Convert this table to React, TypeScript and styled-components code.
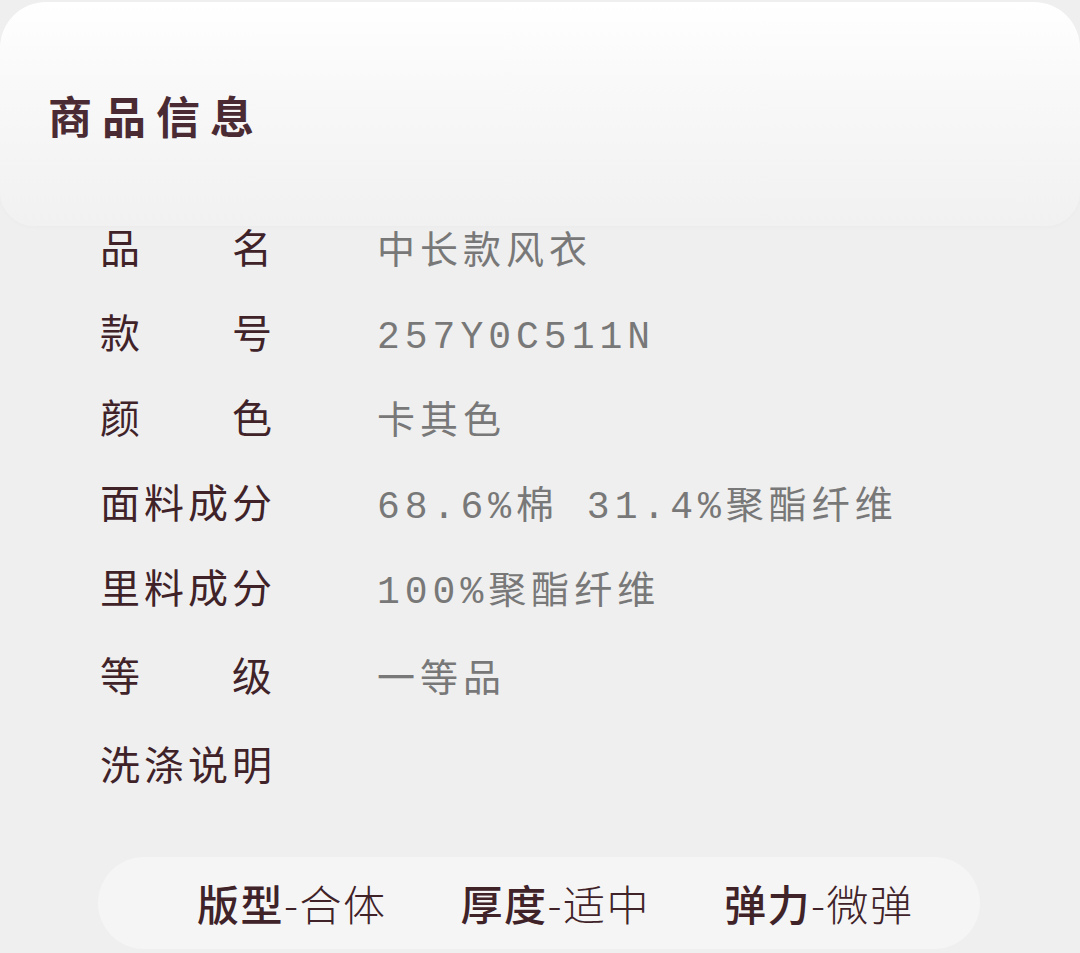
import styled, { createGlobalStyle } from 'styled-components';

//Type
interface specRow {
  label: string
  value?: string
  extra?: number
}

const rows: specRow[] = [
  { label: '品名', value: '中长款风衣' },
  { label: '款号', value: '257Y0C511N' },
  { label: '颜色', value: '卡其色' },
  { label: '面料成分', value: '68.6%棉 31.4%聚酯纤维' },
  { label: '里料成分', value: '100%聚酯纤维' },
  { label: '等级', value: '一等品', extra: 3 },
  { label: '洗涤说明', extra: 4 },
]

const tags = [
  { name: '版型', value: '合体' },
  { name: '厚度', value: '适中' },
  { name: '弹力', value: '微弹' },
]

const App: React.FC = () => {
  return (
    <>
      <GlobalStyle />
      <Page>
        <HeaderCard>
          <Title>商品信息</Title>
        </HeaderCard>
        <SpecList>
          {rows.map((row) => (
            <Row key={row.label} $extra={row.extra || 0}>
              <Label $spread={row.label.length === 2}>
                {row.label.split('').map((ch, i) => (
                  <span key={i}>{ch}</span>
                ))}
              </Label>
              {row.value && <Value>{row.value}</Value>}
            </Row>
          ))}
        </SpecList>
        <TagPill>
          {tags.map((tag) => (
            <Tag key={tag.name}>
              <TagName>{tag.name}</TagName>
              <TagValue>-{tag.value}</TagValue>
            </Tag>
          ))}
        </TagPill>
      </Page>
    </>
  )
}

const GlobalStyle = createGlobalStyle`
  html, body {
    margin: 0;
    padding: 0;
    background: #efefef;
  }
  body {
    font-family: "Noto Sans CJK SC", "Noto Sans", sans-serif;
  }
`

const Page = styled.main`
  width: 1080px;
  min-height: 953px;
  padding-top: 2px;
  box-sizing: border-box;
  background: #efefef;
  overflow: hidden;
`

const HeaderCard = styled.section`
  height: 224px;
  box-sizing: border-box;
  padding: 84px 0 0 48px;
  border-radius: 46px 46px 34px 34px;
  background: linear-gradient(180deg, #ffffff 0%, #f9f9f9 35%, #f1f1f1 100%);
  box-shadow: 0 2px 4px rgba(0, 0, 0, 0.015);
`

const Title = styled.h1`
  margin: 0;
  font-size: 44px;
  line-height: 58px;
  font-weight: 700;
  letter-spacing: 10px;
  color: #4a2b33;
`

const SpecList = styled.div`
  display: flex;
  flex-direction: column;
  gap: 41px;
  padding-left: 100px;
  margin-top: -2px;
`

const Row = styled.div<{ $extra: number }>`
  display: flex;
  align-items: baseline;
  height: 44px;
  margin-top: ${(p) => p.$extra}px;
`

const Label = styled.div<{ $spread: boolean }>`
  width: 172px;
  display: flex;
  justify-content: ${(p) => (p.$spread ? 'space-between' : 'flex-start')};
  gap: ${(p) => (p.$spread ? '0' : '4px')};
  font-size: 40px;
  line-height: 44px;
  color: #3f2329;
  flex-shrink: 0;
`

const Value = styled.div`
  margin-left: 105px;
  font-family: "Liberation Mono", "Noto Sans CJK SC", monospace;
  font-size: 38px;
  line-height: 44px;
  letter-spacing: 5px;
  color: #787878;
  white-space: nowrap;
`

const TagPill = styled.div`
  margin: 72px 0 0 98px;
  width: 882px;
  height: 92px;
  box-sizing: border-box;
  padding-left: 99px;
  border-radius: 46px;
  background: #f5f5f5;
  display: flex;
  align-items: center;
  gap: 74px;
`

const Tag = styled.div`
  display: flex;
  align-items: center;
  font-size: 42px;
  line-height: 50px;
  letter-spacing: 1.5px;
  color: #3f2329;
  white-space: nowrap;
`

const TagName = styled.span`
  font-weight: 500;
`

const TagValue = styled.span`
  font-weight: 300;
`

export default App;
